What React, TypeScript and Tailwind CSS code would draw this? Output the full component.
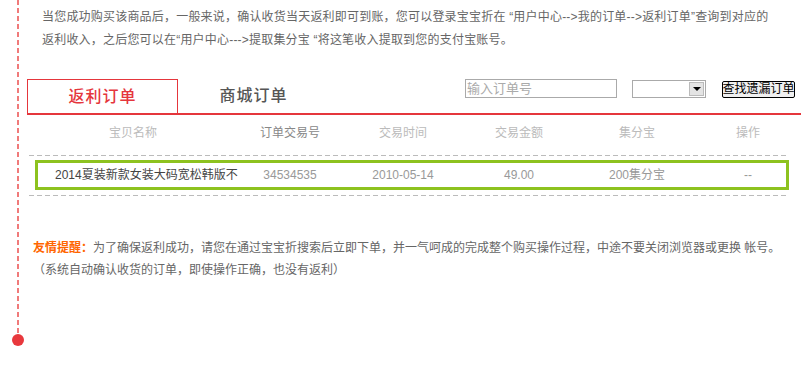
export default function App() {
  const cols = "grid grid-cols-[196px_118px_108px_124px_112px_110px]";

  return (
    <div className="w-[801px] h-[375px] bg-white flex font-['Liberation_Sans','Noto_Sans_CJK_SC',sans-serif] overflow-hidden">
      {/* left timeline rail */}
      <div className="w-[27px] shrink-0 flex flex-col">
        <div className="ml-[17px] w-[2px] h-[334px] bg-[repeating-linear-gradient(to_bottom,#f07a7a_0_5px,transparent_5px_8px)]" />
        <div className="ml-[12px] w-[12px] h-[12px] rounded-full bg-[#e8383d]" />
      </div>

      <div className="flex-1 flex flex-col">
        <p className="pl-[15px] pt-[6px] text-[12px] leading-[23px] tracking-[0.2px] text-[#666] whitespace-nowrap">
          当您成功购买该商品后，一般来说，确认收货当天返利即可到账，您可以登录宝宝折在 “用户中心--&gt;我的订单--&gt;返利订单”查询到对应的
          <br />
          返利收入，之后您可以在“用户中心---&gt;提取集分宝 “将这笔收入提取到您的支付宝账号。
        </p>

        {/* tabs + search */}
        <div className="mt-[27px] flex h-[36px] border-b-2 border-[#e5363c]">
          <div className="w-[151px] border-[1.5px] border-b-0 border-[#e5363c] flex items-center justify-center text-[16px] font-medium tracking-[1px] text-[#e5363c]">
            返利订单
          </div>
          <div className="w-[151px] flex items-center justify-center text-[16px] font-medium tracking-[1px] text-[#555]">
            商城订单
          </div>
          <div className="ml-[136px] flex items-start">
            <div className="w-[152px] h-[19px] border border-[#aaa] pl-[1px] text-[13px] leading-[17px] text-[#aaa]">
              输入订单号
            </div>
            <div className="ml-[15px] mt-[1px] w-[74px] h-[18px] border border-[#aaa] flex justify-end items-center pr-[1px]">
              <div className="w-[15px] h-[14px] bg-[#e4e4e4] border border-[#bbb] flex items-center justify-center">
                <div className="w-0 h-0 border-l-[4px] border-r-[4px] border-t-[4px] border-l-transparent border-r-transparent border-t-black" />
              </div>
            </div>
            <div className="ml-[16px] mt-[2px] w-[73px] h-[17px] border border-black rounded-[2px] bg-[#f0f0f0] text-[12px] leading-[15px] text-black flex items-center justify-center whitespace-nowrap">
              查找遗漏订单
            </div>
          </div>
        </div>

        {/* table header */}
        <div className={`ml-[8px] h-[40px] pt-[10px] ${cols} text-[12px] leading-[16px] text-[#bbb] text-center`}>
          <div>宝贝名称</div>
          <div className="text-[#888]">订单交易号</div>
          <div>交易时间</div>
          <div>交易金额</div>
          <div>集分宝</div>
          <div>操作</div>
        </div>
        <div className="ml-[2px] w-[759px] h-[1px] bg-[repeating-linear-gradient(to_right,#bbb_0_5px,transparent_5px_8px)]" />

        {/* order row */}
        <div className="ml-[8px] mt-[4px] w-[754px] h-[30px] border-[3px] border-[#8dc21f] flex items-center">
          <div className={`-ml-[3px] ${cols} text-[12px] leading-[16px] text-[#999] text-center`}>
            <div className="text-left pl-[20px] text-[#444] whitespace-nowrap">
              2014夏装新款女装大码宽松韩版不
            </div>
            <div>34534535</div>
            <div>2010-05-14</div>
            <div>49.00</div>
            <div>200集分宝</div>
            <div>--</div>
          </div>
        </div>
        <div className="ml-[2px] mt-[5px] w-[759px] h-[1px] bg-[repeating-linear-gradient(to_right,#bbb_0_5px,transparent_5px_8px)]" />

        {/* reminder */}
        <div className="ml-[6px] mt-[41px] text-[12px] leading-[22px] text-[#666] whitespace-nowrap">
          <div>
            <span className="font-bold text-[#f60]">友情提醒：</span>
            为了确保返利成功，请您在通过宝宝折搜索后立即下单，并一气呵成的完成整个购买操作过程，中途不要关闭浏览器或更换 帐号。
          </div>
          <div>（系统自动确认收货的订单，即使操作正确，也没有返利）</div>
        </div>
      </div>
    </div>
  );
}
